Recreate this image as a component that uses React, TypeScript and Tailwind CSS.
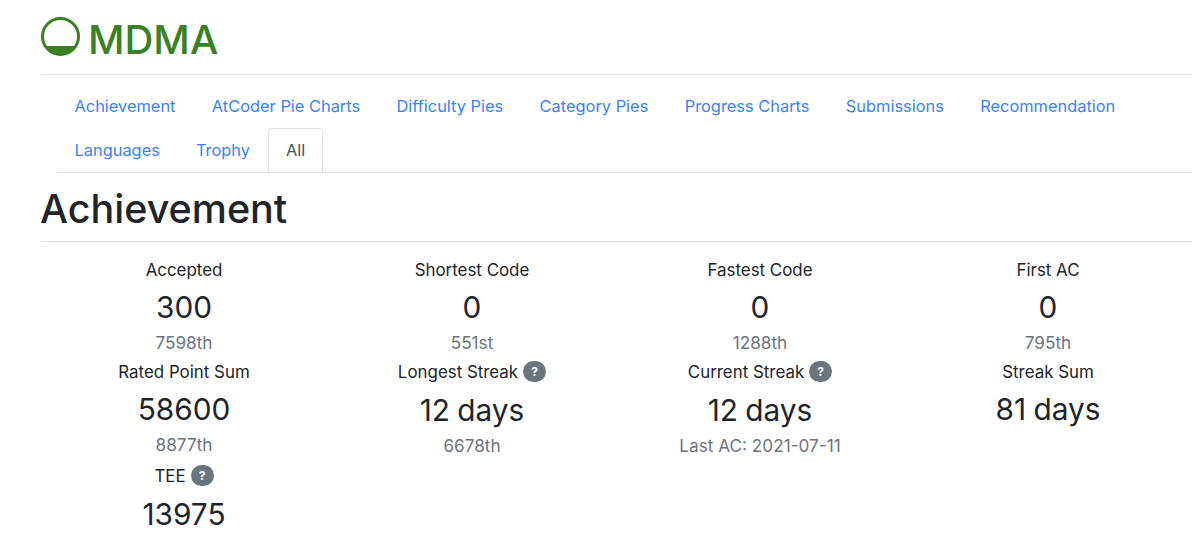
import React from 'react';

type Stat = {
  label: string;
  value: string;
  sub?: string;
  help?: boolean;
};

const rows: Stat[][] = [
  [
    { label: 'Accepted', value: '300', sub: '7598th' },
    { label: 'Shortest Code', value: '0', sub: '551st' },
    { label: 'Fastest Code', value: '0', sub: '1288th' },
    { label: 'First AC', value: '0', sub: '795th' },
  ],
  [
    { label: 'Rated Point Sum', value: '58600', sub: '8877th' },
    { label: 'Longest Streak', value: '12 days', sub: '6678th', help: true },
    { label: 'Current Streak', value: '12 days', sub: 'Last AC: 2021-07-11', help: true },
    { label: 'Streak Sum', value: '81 days' },
  ],
  [{ label: 'TEE', value: '13975', help: true }],
];

const tabRows = [
  ['Achievement', 'AtCoder Pie Charts', 'Difficulty Pies', 'Category Pies', 'Progress Charts', 'Submissions', 'Recommendation'],
  ['Languages', 'Trophy'],
];

function Logo() {
  return (
    <svg width="39" height="39" viewBox="0 0 39 39" className="shrink-0">
      <circle cx="19.5" cy="19.5" r="18" fill="none" stroke="#3a8126" strokeWidth="3" />
      <path d="M4 29 H35 A18 18 0 0 1 4 29 Z" fill="#3a8126" />
    </svg>
  );
}

function StatCell({ stat }: { stat: Stat }) {
  return (
    <div className="flex flex-col items-center">
      <div className={stat.help ? 'flex h-[25px] items-start gap-[5px] text-[16.9px] leading-[26px] text-[#212529]' : 'flex h-[24px] items-start text-[16.9px] leading-[26px] text-[#212529]'}>
        <span>{stat.label}</span>
        {stat.help && (
          <span className="mt-[2px] flex h-[21px] w-[23px] items-center justify-center rounded-full bg-[#6c757d] text-[12px] font-bold text-white">
            ?
          </span>
        )}
      </div>
      <div className="h-[51px] text-[29.8px] leading-[52px] text-[#212529] [word-spacing:-1px]">{stat.value}</div>
      {stat.sub && <div className={stat.help ? 'h-[28px] text-[17.2px] leading-[21px] text-[#6c757d]' : 'h-[27px] text-[17.2px] leading-[21px] text-[#6c757d]'}>{stat.sub}</div>}
    </div>
  );
}

export default function App() {
  return (
    <div className="h-[549px] overflow-hidden bg-white pl-[41px] pr-[8px] font-['Inter',sans-serif]">
      <div className="flex h-[75px] items-start gap-[8px] border-b border-[#e2e3e4] pt-[17px]">
        <Logo />
        <span className="text-[40px] font-medium leading-[46px] text-[#3a8126]">MDMA</span>
      </div>

      <div className="ml-[16px] mt-[10px] flex h-[88px] flex-col border-b border-[#dee2e6]">
        <div className="flex h-[44px] items-center">
          {tabRows[0].map((tab) => (
            <a key={tab} className="px-[18.2px] text-[16.4px] text-[#3b82f6] first:pl-[17.5px]">
              {tab}
            </a>
          ))}
        </div>
        <div className="flex h-[44px] items-center">
          {tabRows[1].map((tab) => (
            <a key={tab} className="px-[18px] text-[16.4px] text-[#3b82f6] first:pl-[17.5px]">
              {tab}
            </a>
          ))}
          <a className="flex h-[44px] items-center rounded-t-[4px] border border-b-0 border-[#dee2e6] bg-white px-[17px] text-[16.4px] text-[#495057]">
            All
          </a>
        </div>
      </div>

      <h1 className="flex h-[69px] items-center border-b border-[#dee2e6] pt-[5px] text-[39.5px] font-medium text-[#212529]">
        <span className="-ml-px">Achievement</span>
      </h1>

      <div className="-ml-px mt-[15px]">
        {rows.map((row, i) => (
          <div key={i} className="grid grid-cols-4">
            {row.map((stat) => (
              <StatCell key={stat.label} stat={stat} />
            ))}
          </div>
        ))}
      </div>
    </div>
  );
}
